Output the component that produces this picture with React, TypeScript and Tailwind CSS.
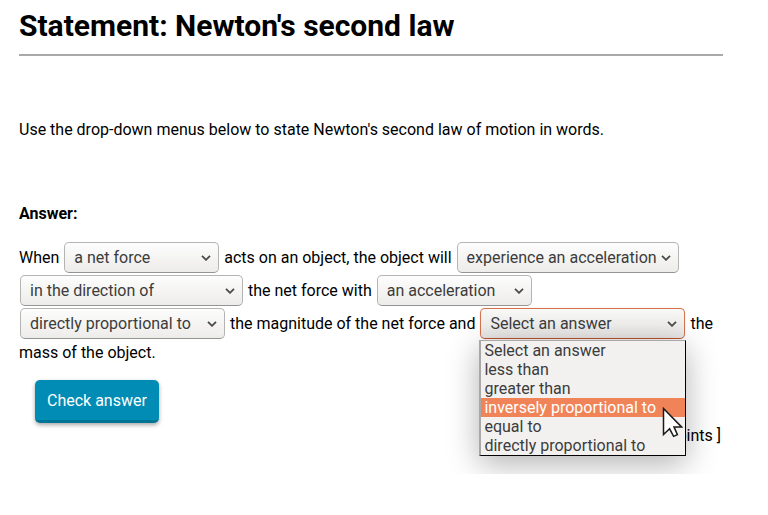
import React from "react";

const choices = [
  "Select an answer",
  "less than",
  "greater than",
  "inversely proportional to",
  "equal to",
  "directly proportional to",
];

type DropdownProps = {
  label: string;
  value: string;
  width: string;
  options?: string[];
  open?: boolean;
  children?: React.ReactNode;
};

function Dropdown({ label, value, width, options, open = false, children }: DropdownProps) {
  const look = open
    ? "border-[#d5734f] border-b-[#b8502c] from-[#f8f8f7] to-[#e7e6e4] shadow-[0_0_1px_#e8a68d]"
    : "border-[#b4b4b2] border-b-[#949492] from-[#fdfdfd] to-[#edecea]";
  return (
    <span className={`relative m-px inline-block ${width}`}>
      <select
        aria-label={label}
        defaultValue={value}
        className={`block h-[31px] w-full appearance-none rounded-[5px] border bg-linear-to-b pl-[9px] text-base text-[#3c3c3c] outline-none ${look}`}
      >
        {(options ?? [value]).map((o) => (
          <option key={o}>{o}</option>
        ))}
      </select>
      <svg
        aria-hidden="true"
        viewBox="0 0 10 6"
        className="pointer-events-none absolute top-[13px] right-2 h-[6px] w-[10px]"
        fill="none"
        stroke="#4a4a4a"
        strokeWidth="1.8"
      >
        <path d="M1 .8 5 4.8 9 .8" />
      </svg>
      {children}
    </span>
  );
}

function OptionList() {
  return (
    <ul
      role="listbox"
      aria-label="Answers"
      className="absolute top-8 -right-px -left-px border-t border-r border-b border-l-2 border-t-[#a8a8a8] border-r-black border-b-black border-l-[#a8a8a8] bg-[#f2f1f0] text-[#3c3c3c] shadow-[0_8px_30px_rgba(0,0,0,0.3)]"
    >
      {choices.map((c) => {
        const active = c === "inversely proportional to";
        return (
          <li
            key={c}
            role="option"
            aria-selected={active}
            className={`pl-[3px] leading-[19px] whitespace-nowrap ${active ? "bg-[#f08458] text-white" : ""}`}
          >
            {c}
          </li>
        );
      })}
      <svg
        aria-hidden="true"
        viewBox="0 0 21 31"
        className="absolute top-[66px] right-[2px] h-[31px] w-[21px]"
      >
        <path
          d="M1.5 1.5V27.5L7.6 21.8L11.6 29.4L15.4 27.7L12 19.9H19.5Z"
          fill="#fff"
          stroke="#1a1a1a"
          strokeWidth="1.5"
        />
      </svg>
    </ul>
  );
}

export default function App() {
  return (
    <main className="overflow-hidden bg-white pt-2 pr-[45px] pb-[26px] pl-[19px] font-[Roboto,sans-serif] text-base text-black">
      <h1 className="border-b-2 border-[#a9a9a9] pb-[10px] text-[30px] leading-9 font-bold">
        Statement: Newton&apos;s second law
      </h1>
      <p className="mt-[62px]">Use the drop-down menus below to state Newton&apos;s second law of motion in words.</p>
      <p className="mt-[60px] font-bold">Answer:</p>
      <div className="mt-[15px] leading-[26px]">
        When <Dropdown label="Cause" value="a net force" width="w-[155px]" /> acts on an object, the object will{" "}
        <Dropdown label="Effect" value="experience an acceleration" width="w-[222px]" />{" "}
        <Dropdown label="Direction" value="in the direction of" width="w-[223px]" /> the net force with{" "}
        <Dropdown label="Quantity" value="an acceleration" width="w-[155px]" />{" "}
        <Dropdown label="Relation to force" value="directly proportional to" width="w-[205px]" /> the magnitude of the
        net force and{" "}
        <Dropdown label="Relation to mass" value="Select an answer" options={choices} width="w-[205px]" open>
          <OptionList />
        </Dropdown>{" "}
        the mass of the object.
      </div>
      <button
        type="button"
        className="mt-[14px] ml-4 block h-[43px] rounded-[5px] border-b-3 border-[#007596] bg-[#008cb4] px-3 pt-[2px] text-white shadow-[0_2px_4px_rgba(0,0,0,0.35)]"
      >
        Check answer
      </button>
      <p className="mt-px mr-[2px] text-right">points ]</p>
    </main>
  );
}
